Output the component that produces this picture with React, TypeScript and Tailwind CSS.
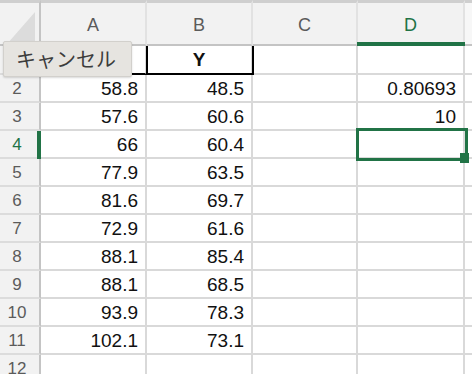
const cols = ["A", "B", "C", "D"];

type RowData = { n: number; a?: string; b?: string; d?: string };

// row 1 header number and "X" sit under the tooltip, so they are left out
const rows: RowData[] = [
  { n: 1, b: "Y" },
  { n: 2, a: "58.8", b: "48.5", d: "0.80693" },
  { n: 3, a: "57.6", b: "60.6", d: "10" },
  { n: 4, a: "66", b: "60.4" },
  { n: 5, a: "77.9", b: "63.5" },
  { n: 6, a: "81.6", b: "69.7" },
  { n: 7, a: "72.9", b: "61.6" },
  { n: 8, a: "88.1", b: "85.4" },
  { n: 9, a: "88.1", b: "68.5" },
  { n: 10, a: "93.9", b: "78.3" },
  { n: 11, a: "102.1", b: "73.1" },
  { n: 12 },
];

const cellBase = "flex items-center border-r-2 border-b-2 border-[#d9d9d9] bg-white pt-[2px] text-[19px] text-[#111]";
const cell = `${cellBase} justify-end pr-[7px]`;
const titleCell = `${cellBase} justify-center font-bold`;

export default function App() {
  return (
    <div className="relative h-[374px] w-[472px] overflow-hidden bg-white font-['Liberation_Sans',Arial,sans-serif]">
      <div className="grid grid-cols-[41px_106px_106px_105px_107px_1fr] grid-rows-[46px_29px_repeat(11,28px)]">
        {/* corner */}
        <div className="relative border-t-[3px] border-r-2 border-b-2 border-t-[#cfcfcf] border-r-[#c4c4c4] border-b-[#c4c4c4] bg-[#f2f2f2]">
          <svg className="absolute left-[7px] top-[9px]" width="28" height="32" viewBox="0 0 28 32">
            <polygon points="28,0 28,32 0,32" fill="#dcdcdc" />
          </svg>
        </div>
        {cols.map((c) => (
          <div
            key={c}
            className={`relative flex items-center justify-center border-t-[3px] border-r-2 border-b-2 border-t-[#cfcfcf] border-r-[#e2e2e2] border-b-[#c4c4c4] bg-[#f2f2f2] pt-[4px] text-[18px] ${
              c === "D" ? "text-[#217346]" : "text-[#5b5b5b]"
            }`}
          >
            {c}
            {c === "D" && <div className="absolute -bottom-[2px] -left-[1px] -right-[2px] h-[4px] bg-[#217346]" />}
          </div>
        ))}
        <div className="border-t-[3px] border-b-2 border-t-[#cfcfcf] border-b-[#c4c4c4] bg-[#f7f7f7]" />

        {rows.map((r) => (
          <Row key={r.n} r={r} />
        ))}
      </div>

      {/* tooltip */}
      <div className="absolute left-[3px] top-[41px] z-20 flex h-[36px] w-[129px] items-center rounded-[2px] border border-[#d2d0cc] bg-[#e6e4e0] pl-[12px] font-['Noto_Sans_CJK_JP',sans-serif] text-[20px] text-[#3c3c3c] shadow-[0_1px_2px_rgba(0,0,0,0.15)]">
        キャンセル
      </div>
    </div>
  );
}

function Row({ r }: { r: RowData }) {
  const active = r.n === 4;
  const header = r.n === 1;
  return (
    <>
      <div
        className={`relative flex items-center justify-center border-r-2 border-b-2 border-r-[#c4c4c4] border-b-[#dcdcdc] bg-[#f2f2f2] pr-[5px] pt-[2px] text-[17px] ${
          active ? "text-[#217346]" : "text-[#5b5b5b]"
        }`}
      >
        {header ? null : r.n}
        {active && <div className="absolute -right-[2px] top-0 h-[28px] w-[4px] bg-[#217346]" />}
      </div>
      <div className={header ? `${titleCell} border-b-black` : cell}>{r.a}</div>
      <div className={header ? `${titleCell} relative` : `${cell} relative`}>
        {r.b}
        {header && (
          <div className="absolute -bottom-[2px] -left-[1px] -right-[3px] top-0 z-10 border-x-2 border-b-2 border-black" />
        )}
      </div>
      <div className={cell} />
      <div className={`${cell} relative`}>
        {r.d}
        {active && (
          <div className="absolute -bottom-[4px] -left-[2px] -right-[5px] -top-[3px] z-10 border-[3px] border-[#217346]">
            <div className="absolute -bottom-[5px] -right-[4px] h-[10px] w-[9px] bg-[#217346]" />
          </div>
        )}
      </div>
      <div className="border-b-2 border-[#d9d9d9] bg-white" />
    </>
  );
}
